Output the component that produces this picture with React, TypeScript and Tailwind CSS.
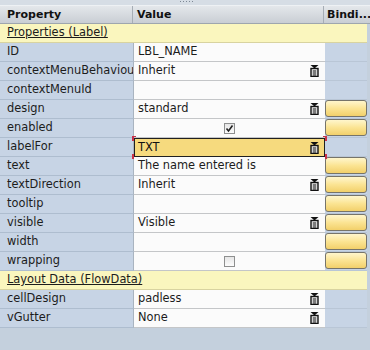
import React from "react";

type Kind = "text" | "dropdown" | "check" | "uncheck" | "empty";
type Row = { name: string; value?: string; kind: Kind; button: boolean; selected?: boolean };

const group1: Row[] = [
  { name: "ID", value: "LBL_NAME", kind: "text", button: false },
  { name: "contextMenuBehaviour", value: "Inherit", kind: "dropdown", button: false },
  { name: "contextMenuId", kind: "empty", button: false },
  { name: "design", value: "standard", kind: "dropdown", button: true },
  { name: "enabled", kind: "check", button: true },
  { name: "labelFor", value: "TXT", kind: "dropdown", button: false, selected: true },
  { name: "text", value: "The name entered is", kind: "text", button: true },
  { name: "textDirection", value: "Inherit", kind: "dropdown", button: true },
  { name: "tooltip", kind: "empty", button: true },
  { name: "visible", value: "Visible", kind: "dropdown", button: true },
  { name: "width", kind: "empty", button: true },
  { name: "wrapping", kind: "uncheck", button: true },
];

const group2: Row[] = [
  { name: "cellDesign", value: "padless", kind: "dropdown", button: false },
  { name: "vGutter", value: "None", kind: "dropdown", button: false },
];

function DropIcon() {
  return (
    <svg width="9" height="12" viewBox="0 0 9 12" className="shrink-0">
      <polygon points="0.5,0 8.5,0 4.5,3.5" fill="#111" />
      <rect x="1" y="3.5" width="7" height="8" fill="#e8e8e8" stroke="#111" strokeWidth="1.4" />
      <line x1="2.8" y1="6" x2="6.2" y2="6" stroke="#111" strokeWidth="1" />
      <line x1="2.8" y1="8" x2="6.2" y2="8" stroke="#111" strokeWidth="1" />
      <line x1="2.8" y1="10" x2="6.2" y2="10" stroke="#111" strokeWidth="1" />
    </svg>
  );
}

function CheckBox({ checked }: { checked: boolean }) {
  return (
    <div className="w-[11px] h-[11px] border border-[#8e8f8f] bg-gradient-to-b from-[#e6e6e6] to-[#fcfcfc] flex items-center justify-center">
      {checked && (
        <svg width="9" height="9" viewBox="0 0 9 9">
          <polyline points="1.5,4.5 3.5,7 7.5,1.5" fill="none" stroke="#222" strokeWidth="1.6" />
        </svg>
      )}
    </div>
  );
}

function Corner({ pos }: { pos: string }) {
  return <div className={`absolute w-[4px] h-[5px] border-[#c8324a] ${pos}`} />;
}

function PropRow({ r }: { r: Row }) {
  return (
    <div className="grid grid-cols-[134px_191px_42px] h-[19px]">
      <div className="bg-[#c7d4e5] border-b border-b-[#aebdcf] border-r border-r-[#a9b4c0] pl-[7px] flex items-center overflow-hidden whitespace-nowrap text-[#1c1c1c]">
        {r.name}
      </div>
      <div className="relative bg-[#fbfbfb] border-b border-b-[#c4c6c8]">
        {r.selected ? (
          <div className="absolute left-0 top-0 w-[191px] h-[19px] bg-[#f6da7e] border border-[#202020] flex items-center pl-[3px] pr-[5px]">
            <span className="flex-1 text-[#111]">{r.value}</span>
            <DropIcon />
            <Corner pos="left-[-3px] top-[-3px] border-l-2 border-t" />
            <Corner pos="left-[-3px] bottom-[-3px] border-l-2 border-b" />
            <Corner pos="right-[-3px] top-[-3px] border-r-2 border-t" />
            <Corner pos="right-[-3px] bottom-[-3px] border-r-2 border-b" />
          </div>
        ) : r.kind === "check" || r.kind === "uncheck" ? (
          <div className="h-full flex items-center justify-center">
            <CheckBox checked={r.kind === "check"} />
          </div>
        ) : (
          <div className="h-full flex items-center pl-[4px] pr-[6px] whitespace-nowrap overflow-hidden text-[#1c1c1c]">
            <span className="flex-1">{r.value}</span>
            {r.kind === "dropdown" && <DropIcon />}
          </div>
        )}
      </div>
      <div className="bg-[#c7d4e5] border-b border-b-[#b9c6d6] flex items-start">
        {r.button && (
          <div className="w-[42px] h-[17px] rounded-[3px] border border-[#76746a] bg-gradient-to-b from-[#fff6cc] via-[#fbe493] to-[#f2d06a]" />
        )}
      </div>
    </div>
  );
}

function Section({ title }: { title: string }) {
  return (
    <div className="w-[367px] h-[19px] bg-[#faf6be] border-b border-b-[#d8d3a0] flex items-center pl-[7px]">
      <span className="underline text-[#1c1c1c]">{title}</span>
    </div>
  );
}

export default function App() {
  return (
    <div className="w-[370px] h-[350px] bg-[#c4d0dd] overflow-hidden text-[11.4px] leading-none font-['DejaVu_Sans',sans-serif]">
      <div className="h-[5px] bg-[#d6dde5] flex justify-center items-start">
        <div className="flex gap-[2px] ml-[2px] mt-[1px]">
          {[0, 1, 2, 3, 4].map((i) => (
            <div key={i} className="w-[1px] h-[1px] bg-[#7c8794]" />
          ))}
        </div>
      </div>
      <div className="grid grid-cols-[133px_191px_46px] h-[19px] bg-gradient-to-b from-[#e4e7eb] to-[#c9ced4] border-t border-t-[#eef1f4] border-b border-b-[#9ea6ae] font-bold text-[11px] text-[#111]">
        <div className="border-r border-r-[#a6adb5] pl-[7px] flex items-center">Property</div>
        <div className="border-r border-r-[#a6adb5] pl-[4px] flex items-center">Value</div>
        <div className="pl-[3px] flex items-center whitespace-nowrap">Bindi...</div>
      </div>
      <Section title="Properties (Label)" />
      {group1.map((r) => (
        <PropRow key={r.name} r={r} />
      ))}
      <Section title="Layout Data (FlowData)" />
      {group2.map((r) => (
        <PropRow key={r.name} r={r} />
      ))}
    </div>
  );
}
